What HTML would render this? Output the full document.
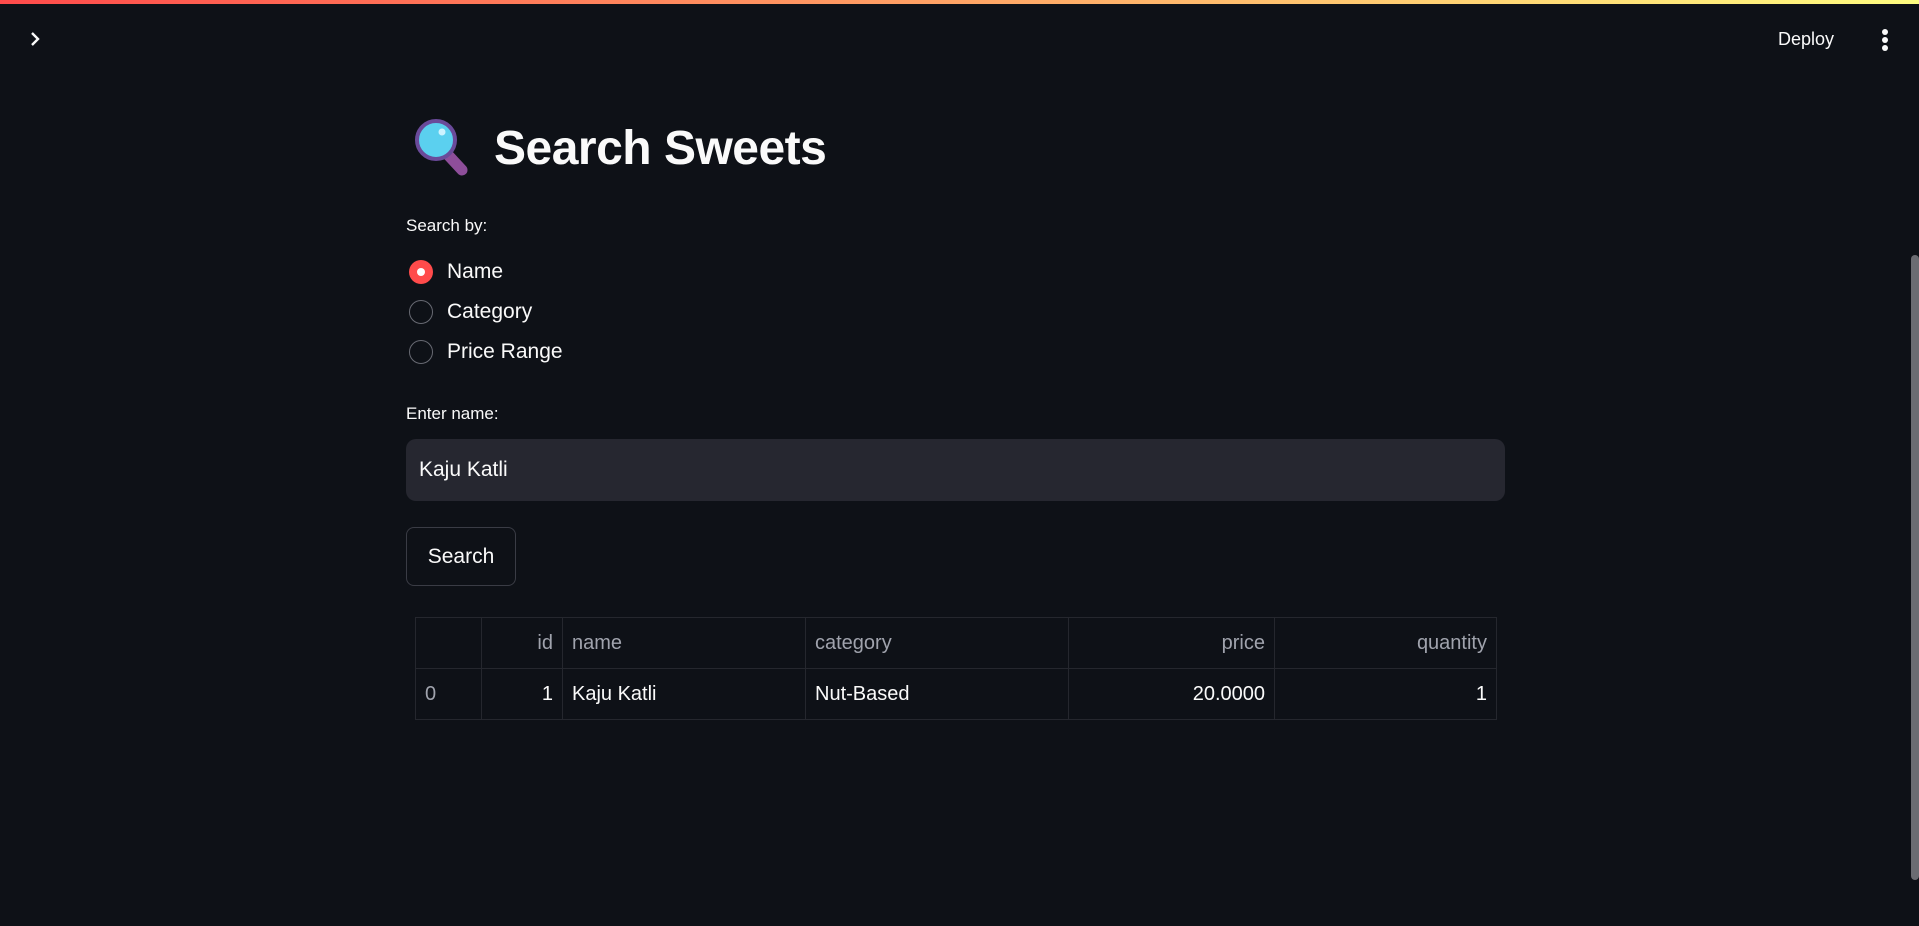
<!DOCTYPE html>
<html><head><meta charset="utf-8"><style>
*{margin:0;padding:0;box-sizing:border-box}
html,body{width:1919px;height:926px;overflow:hidden;background:#0e1117;color:#fafafa;font-family:"Liberation Sans",sans-serif}
.bar{position:absolute;left:0;top:0;width:1919px;height:4px;background:linear-gradient(90deg,#ff4b4b,#fffd80)}
.abs{position:absolute}
.radio{position:absolute;left:409px;width:24px;height:24px;border-radius:50%;border:1.5px solid #686a73}
.radio.on{background:#ff4b4b;border:none}
.radio.on::after{content:"";position:absolute;left:8px;top:8px;width:8px;height:8px;border-radius:50%;background:#fff}
.rl{position:absolute;left:447px;font-size:21px}
table{position:absolute;left:415px;top:617px;border-collapse:collapse;font-size:20px}
td{border:1px solid #25272e;height:51px;padding:0 9px;white-space:nowrap}
thead td{color:#a0a3ad}
.r{text-align:right}
</style></head><body>
<div class="bar"></div>
<svg class="abs" style="left:28px;top:31px" width="14" height="16" viewBox="0 0 14 16"><path d="M4 2l6 6-6 6" stroke="#fafafa" stroke-width="2.4" fill="none"/></svg>
<div class="abs" style="left:1778px;top:29px;font-size:18px">Deploy</div>
<div class="abs" style="left:1882px;top:29px;width:6px;height:6px;border-radius:50%;background:#fafafa"></div>
<div class="abs" style="left:1882px;top:37px;width:6px;height:6px;border-radius:50%;background:#fafafa"></div>
<div class="abs" style="left:1882px;top:45px;width:6px;height:6px;border-radius:50%;background:#fafafa"></div>
<div class="abs" style="left:1911px;top:255px;width:8px;height:625px;border-radius:4px;background:#6b6c72"></div>
<svg class="abs" style="left:414px;top:118px" width="60" height="60" viewBox="0 0 60 60"><line x1="35" y1="38" x2="48" y2="52" stroke="#8e4e9a" stroke-width="11" stroke-linecap="round"/><circle cx="22" cy="22" r="19" fill="#5bd0ef" stroke="#6a4a9a" stroke-width="4"/><circle cx="28" cy="14" r="3.5" fill="#cdf3ff"/></svg>
<div class="abs" style="left:494px;top:121px;font-size:48px;font-weight:bold;letter-spacing:-0.5px">Search Sweets</div>
<div class="abs" style="left:406px;top:216px;font-size:17px">Search by:</div>
<div class="radio on" style="top:260px"></div><div class="rl" style="top:260px">Name</div>
<div class="radio" style="top:300px"></div><div class="rl" style="top:300px">Category</div>
<div class="radio" style="top:340px"></div><div class="rl" style="top:340px">Price Range</div>
<div class="abs" style="left:406px;top:404px;font-size:17px">Enter name:</div>
<div class="abs" style="left:406px;top:439px;width:1099px;height:62px;border-radius:10px;background:#262730;padding-left:13px;line-height:62px;font-size:21px">Kaju Katli</div>
<div class="abs" style="left:406px;top:527px;width:110px;height:59px;border-radius:8px;border:1px solid #3a3c45;text-align:center;line-height:57px;font-size:21px">Search</div>
<table>
<thead><tr><td style="width:66px"></td><td class="r" style="width:81px">id</td><td style="width:243px">name</td><td style="width:263px">category</td><td class="r" style="width:206px">price</td><td class="r" style="width:222px">quantity</td></tr></thead>
<tbody><tr><td style="color:#a0a3ad">0</td><td class="r">1</td><td>Kaju Katli</td><td>Nut-Based</td><td class="r">20.0000</td><td class="r">1</td></tr></tbody>
</table>
</body></html>
